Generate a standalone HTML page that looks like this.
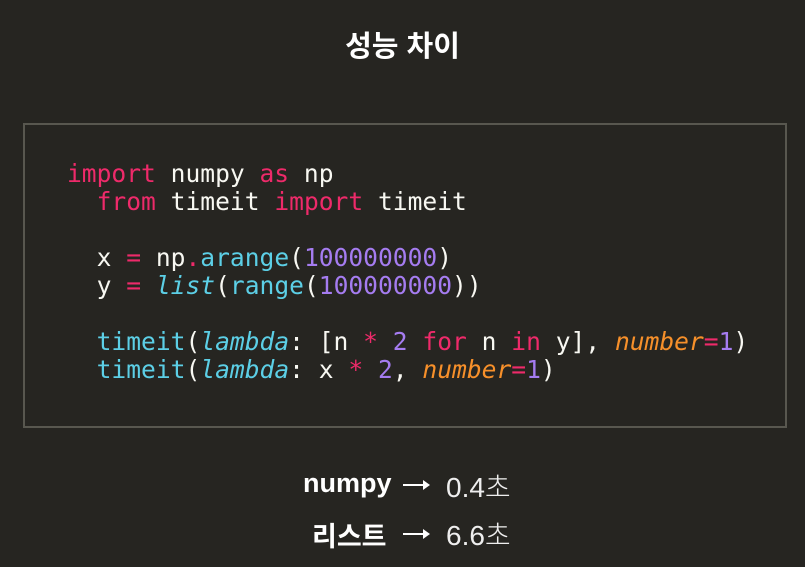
<!DOCTYPE html>
<html><head><meta charset="utf-8"><style>
body{margin:0;width:805px;height:567px;background:#262521;overflow:hidden;position:relative;font-family:"Liberation Sans","Noto Sans CJK KR",sans-serif;color:#fff}
.t{position:absolute;top:23px;left:0;width:805px;text-align:center;font-size:29px;font-weight:bold}
.box{position:absolute;left:23px;top:123px;width:760px;height:301px;border:2px solid #58574f}
pre{position:absolute;left:67px;top:160px;margin:0;font-family:"DejaVu Sans Mono",monospace;font-size:24.6px;line-height:28px;color:#f8f8f2}
.k{color:#ee2a6a}.f{color:#5ccfe6}.n{color:#a57cf0}.o{color:#f7902a;font-style:italic}.i{font-style:italic;color:#5ccfe6}
.r{position:absolute;font-size:27px}
.b{font-weight:bold}
.l{font-weight:300;color:#eee;font-size:28px}
.a{position:absolute;left:403px;width:24px;height:2px;background:#fff}
.a:after{content:"";position:absolute;right:-3px;top:-4px;border-left:7px solid #fff;border-top:5px solid transparent;border-bottom:5px solid transparent}
</style></head><body>
<div class="t">성능 차이</div>
<div class="box"></div>
<pre><span class="k">import</span> numpy <span class="k">as</span> np
  <span class="k">from</span> timeit <span class="k">import</span> timeit

  x <span class="k">=</span> np<span class="k">.</span><span class="f">arange</span>(<span class="n">100000000</span>)
  y <span class="k">=</span> <span class="i">list</span>(<span class="f">range</span>(<span class="n">100000000</span>))

  <span class="f">timeit</span>(<span class="i">lambda</span>: [n <span class="k">*</span> <span class="n">2</span> <span class="k">for</span> n <span class="k">in</span> y], <span class="o">number</span><span class="k">=</span><span class="n">1</span>)
  <span class="f">timeit</span>(<span class="i">lambda</span>: x <span class="k">*</span> <span class="n">2</span>, <span class="o">number</span><span class="k">=</span><span class="n">1</span>)</pre>
<div class="r b" style="left:303px;top:468px">numpy</div>
<div class="a" style="top:484px"></div>
<div class="r l" style="left:446px;top:466px">0.4초</div>
<div class="r b" style="left:312px;top:515px">리스트</div>
<div class="a" style="top:533px"></div>
<div class="r l" style="left:446px;top:514px">6.6초</div>
</body></html>
